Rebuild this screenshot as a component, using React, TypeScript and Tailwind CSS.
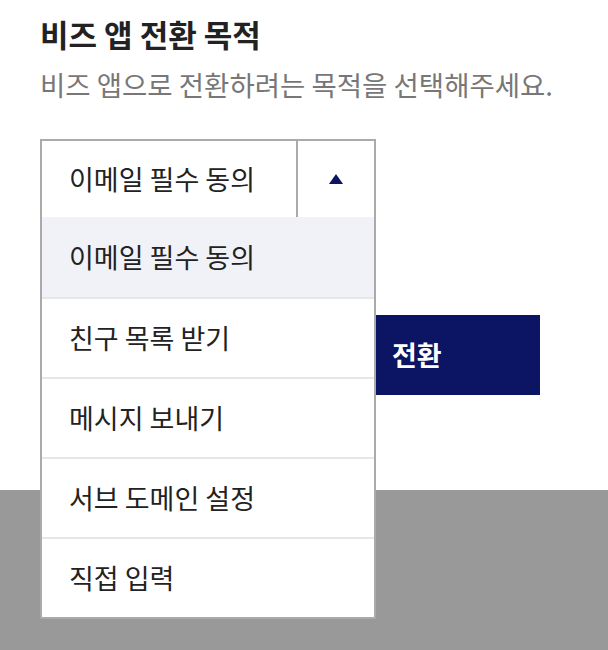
import { useState } from 'react'

const OPTIONS = ['이메일 필수 동의', '친구 목록 받기', '메시지 보내기', '서브 도메인 설정', '직접 입력']

function Triangle() {
    return (
        <svg width="14" height="10" viewBox="0 0 14 10" className="block">
            <path d="M7 0 L14 10 L0 10 Z" fill="#0b1563" />
        </svg>
    )
}

export default function App() {
    const [selected, setSelected] = useState(OPTIONS[0])
    const [open, setOpen] = useState(true)

    return (
        <div
            className="min-h-[650px] w-[608px] bg-[#999999]"
            style={{ fontFamily: '"Noto Sans CJK KR", "Noto Sans", sans-serif' }}
        >
            <div className="h-[490px] bg-white px-10 pt-[13px]">
                <h2 className="text-[31px] font-bold leading-[42px] text-[#222222]">비즈 앱 전환 목적</h2>
                <p className="mt-[12px] text-[27.5px] leading-[34px] text-[#777777]">
                    비즈 앱으로 전환하려는 목적을 선택해주세요.
                </p>

                <div className="relative mt-[38px] w-[336px]">
                    <button
                        type="button"
                        onClick={() => setOpen(!open)}
                        className="flex h-[80px] w-full items-stretch border-2 border-[#aaaaaa] bg-white text-left"
                    >
                        <span className="flex flex-1 items-center pl-[27px] text-[27px] text-[#222222]">{selected}</span>
                        <span className="flex w-[78px] items-center justify-center border-l-2 border-[#aaaaaa]">
                            <Triangle />
                        </span>
                    </button>

                    {open && (
                        <ul className="absolute left-0 top-[78px] z-10 w-full border-2 border-t-0 border-[#aaaaaa] bg-white">
                            {OPTIONS.map((opt, i) => (
                                <li
                                    key={opt}
                                    onClick={() => {
                                        setSelected(opt)
                                        setOpen(false)
                                    }}
                                    className={`flex h-[80px] items-center pl-[27px] text-[27px] text-[#222222] ${
                                        i > 0 ? 'border-t-2 border-[#e6e6e6]' : ''
                                    } ${opt === selected ? 'bg-[#f1f2f7]' : ''}`}
                                >
                                    {opt}
                                </li>
                            ))}
                        </ul>
                    )}
                </div>

                <div className="mt-[96px] flex">
                    <button
                        type="button"
                        className="ml-[336px] flex h-[80px] w-[164px] items-center bg-[#0b1563] pl-[16px] text-[27px] font-bold text-white"
                    >
                        전환
                    </button>
                </div>
            </div>
        </div>
    )
}
